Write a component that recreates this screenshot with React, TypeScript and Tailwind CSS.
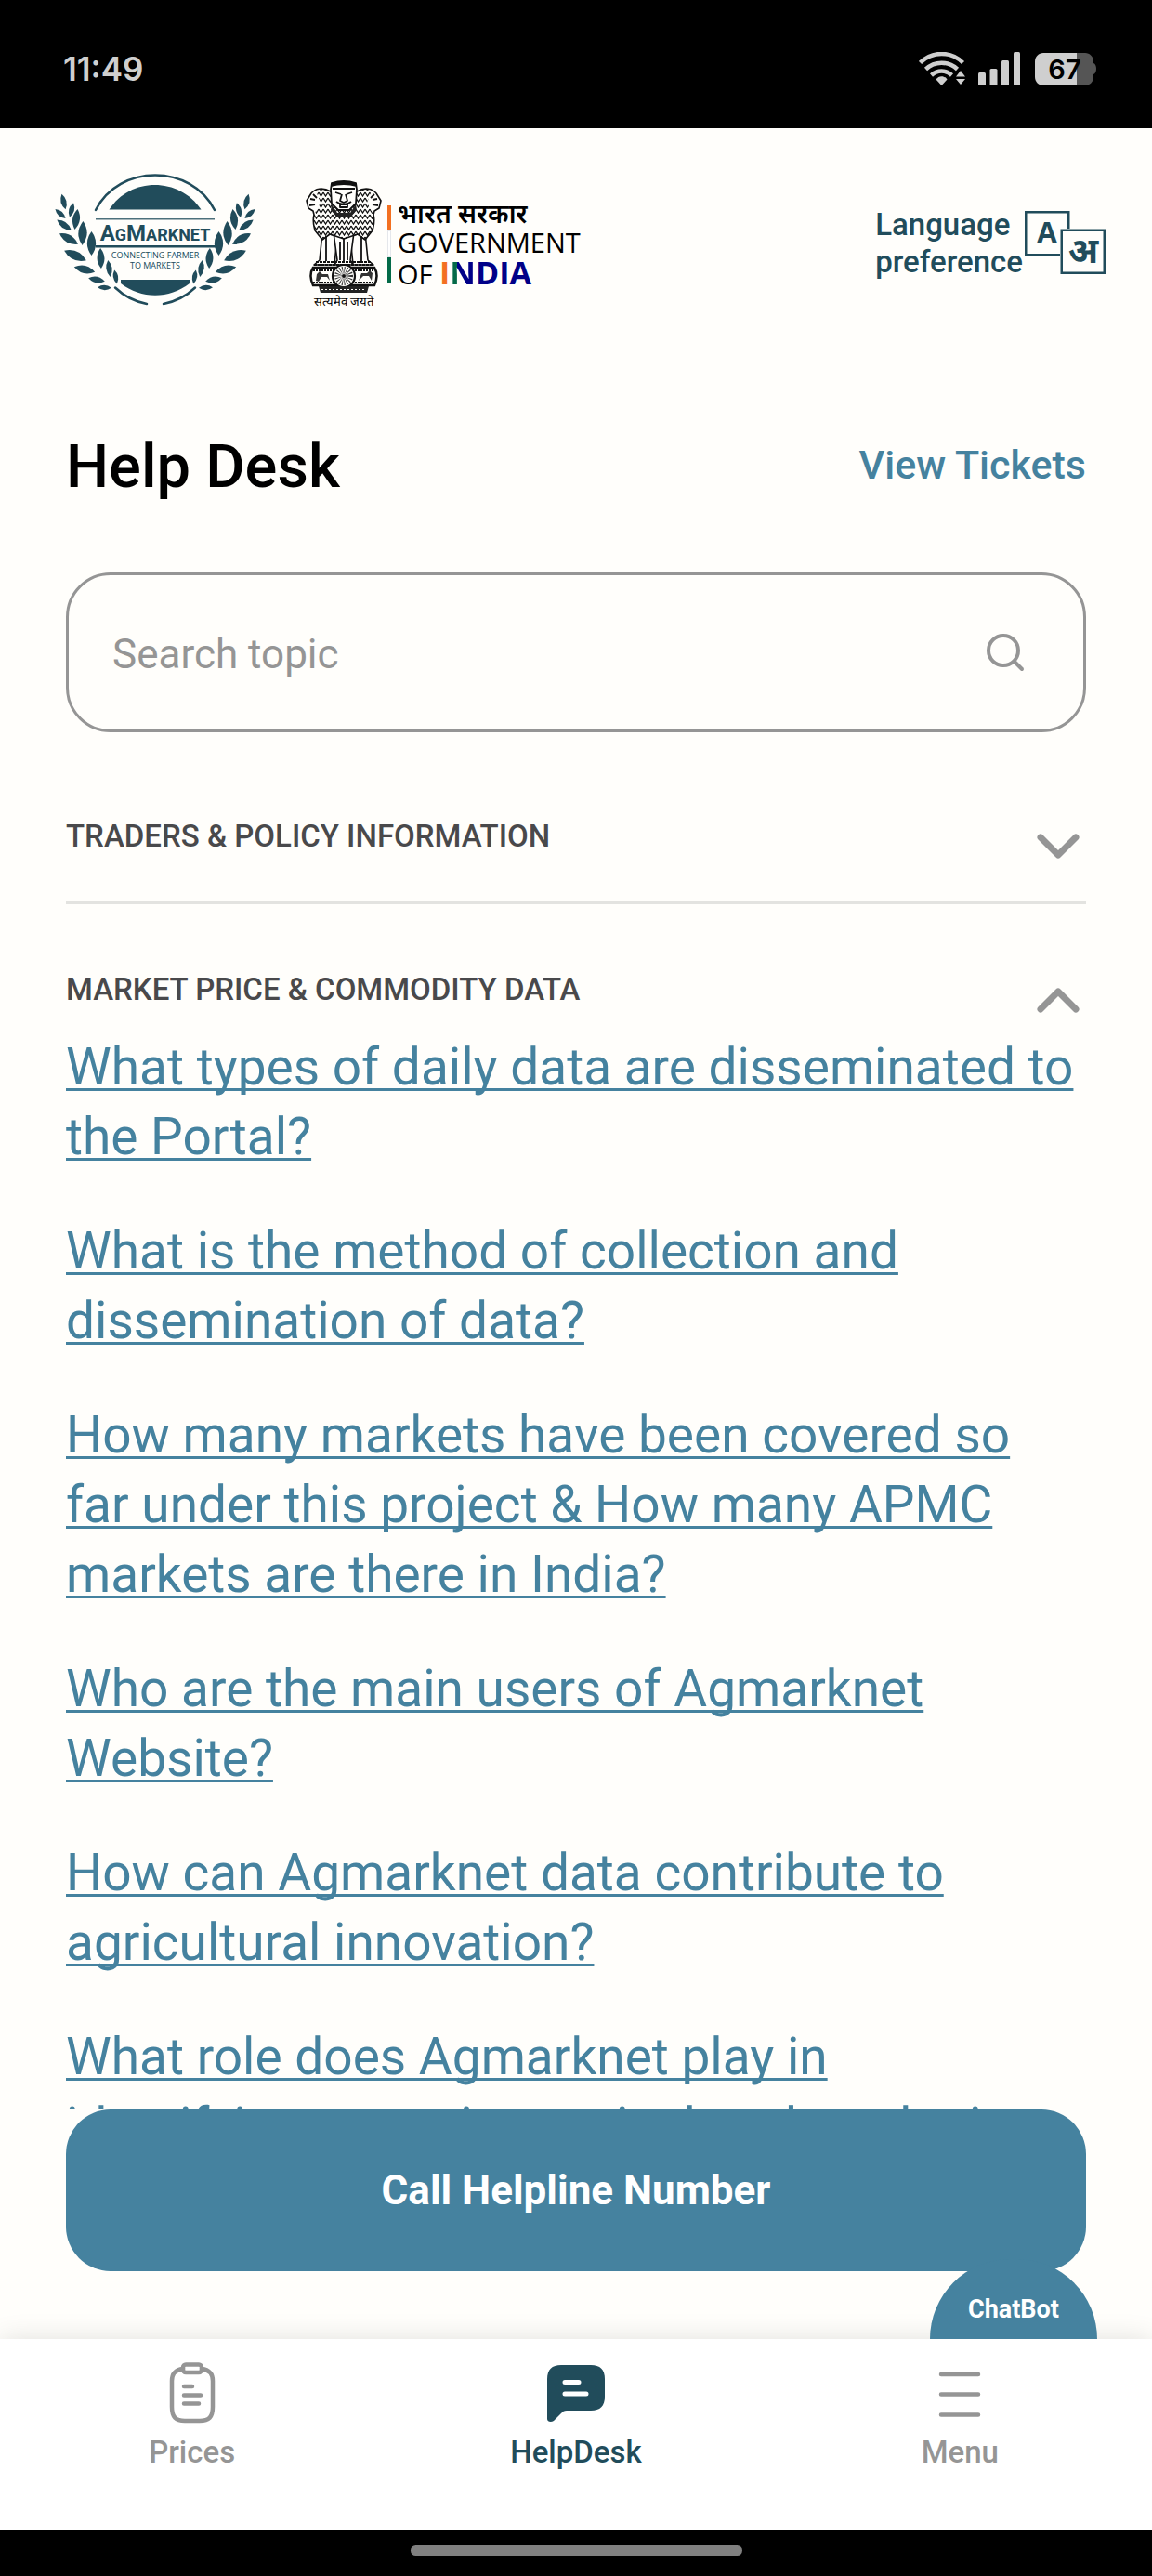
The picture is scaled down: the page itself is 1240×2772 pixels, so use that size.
import { useState } from 'react';

/* ── data ────────────────────────────────────────────────── */

const questions = [
  'What types of daily data are disseminated to the Portal?',
  'What is the method of collection and dissemination of data?',
  'How many markets have been covered so far under this project & How many APMC markets are there in India?',
  'Who are the main users of Agmarknet Website?',
  'How can Agmarknet data contribute to agricultural innovation?',
  'What role does Agmarknet play in identifying\u00a0emerging agricultural marketing trends?',
];

const sections = [
  { title: 'TRADERS & POLICY INFORMATION', items: [] as string[] },
  { title: 'MARKET PRICE & COMMODITY DATA', items: questions },
];

/* ── status bar ──────────────────────────────────────────── */

function StatusIcons() {
  return (
    <svg className="h-[36px] w-[191px]" viewBox="0 0 191 36" aria-hidden="true">
      <g fill="none" stroke="#cfcfcf" strokeWidth="4.5">
        <path d="M1.500 11.500C14.500-1.200 34.500-1.200 47.500 11.500" />
        <path d="M7.500 18.500C17 9.500 32 9.500 41.500 18.500" />
        <path d="M13.500 25C20 19 29 19 35.500 25" />
      </g>
      <path d="M24.500 36l-6-6.500c3-4.500 9-4.500 12 0z" fill="#cfcfcf" />
      <path d="M45 20l5 6.500H40zM45 35l5-6H40z" fill="#cfcfcf" />
      <g fill="#cfcfcf">
        <rect x="64" y="22" width="8" height="14" rx="1.500" />
        <rect x="76.500" y="18" width="8" height="18" rx="1.500" />
        <rect x="89" y="9" width="8" height="27" rx="1.500" />
        <rect x="102" y="0" width="7" height="36" rx="1.500" />
      </g>
      <path d="M170 1h9c5 0 9 4 9 9v2c4 1 4 11 0 12v3c0 5-4 9-9 9h-9z" fill="#555" />
      <path d="M134 1h36v35h-36c-5 0-9-4-9-9V10c0-5 4-9 9-9z" fill="#cfcfcf" />
      <text x="157" y="29" textAnchor="middle" fontSize="29" fontWeight="600" fontFamily="Inter, sans-serif">
        67
      </text>
    </svg>
  );
}

/* ── logos ───────────────────────────────────────────────── */

// One branch of the wreath, the other one is mirrored
const leaves = [
  { x: 18.5, y: 47, r: 76, l: 8.5 },
  { x: 27, y: 56, r: 105, l: 8 },
  { x: 15, y: 60, r: 42, l: 7.5 },
  { x: 32, y: 66, r: 98, l: 11 },
  { x: 19, y: 72, r: 36, l: 9.5 },
  { x: 39, y: 81, r: 92, l: 13 },
  { x: 24, y: 87, r: 30, l: 11.5 },
  { x: 48.5, y: 92, r: 90, l: 13 },
  { x: 31, y: 105, r: 24, l: 13 },
  { x: 58.5, y: 108, r: 88, l: 11 },
  { x: 41, y: 120, r: 14, l: 11.5 },
  { x: 67.5, y: 119, r: 82, l: 9 },
  { x: 54, y: 131, r: 12, l: 9 },
  { x: 74.5, y: 128, r: 80, l: 7.5 },
  { x: 62.5, y: 139.5, r: 2, l: 7.5 },
];

function Branch() {
  return (
    <g>
      {leaves.map((leaf) => (
        <path
          key={`${leaf.x}-${leaf.y}`}
          transform={`translate(${leaf.x} ${leaf.y}) rotate(${leaf.r})`}
          d={`M${-leaf.l} 0Q0 ${-leaf.l * 0.72} ${leaf.l} 0Q0 ${leaf.l * 0.72} ${-leaf.l} 0z`}
        />
      ))}
    </g>
  );
}

function AgmarknetLogo() {
  return (
    <svg className="h-[170px] w-[240px]" viewBox="0 0 240 170" role="img" aria-label="Agmarknet">
      <g fill="#214c5b">
        <path d="M67.500 55.500C90 20 143 20 166.500 55.500z" />
        <path d="M80 131h74v4c-22 17-52 17-74 0z" />
        <Branch />
        <g transform="matrix(-1 0 0 1 234 0)">
          <Branch />
        </g>
        <rect x="53" y="94" width="129" height="2.500" />
        <rect x="53" y="65" width="128" height="1.500" opacity="0.8" />
      </g>
      <g fill="none" stroke="#214c5b" strokeWidth="2.500" strokeLinecap="round">
        <path d="M53 56C78 6 156 6 181 56" />
        <path d="M74 139.500Q88 153 108 157" />
        <path d="M160 139.500Q146 153 126 157" />
      </g>
      <g fill="#214c5b" textAnchor="middle">
        <text x="117" y="89" fontSize="24" fontWeight="700" fontFamily="Roboto, sans-serif">
          <tspan>A</tspan>
          <tspan fontSize="18">G</tspan>
          <tspan>M</tspan>
          <tspan fontSize="18">ARKNET</tspan>
        </text>
        <g fontSize="9" fontWeight="500" fontFamily="'Open Sans', 'Noto Sans', sans-serif">
          <text x="117" y="108">CONNECTING FARMER</text>
          <text x="117" y="119">TO MARKETS</text>
        </g>
      </g>
    </svg>
  );
}

function Lions() {
  return (
    <svg className="h-[122px] w-[84px]" viewBox="0 0 84 122" aria-hidden="true">
      <defs>
        <pattern id="fur" width="5" height="6" patternUnits="userSpaceOnUse">
          <path d="M0 1l2.500 4L5 1M-2.500 4L0 7M5 7l2.500-4" stroke="#111" strokeWidth="1.300" fill="none" />
        </pattern>
      </defs>
      <g fill="#fffefb" stroke="#111" strokeWidth="1.600" strokeLinejoin="round">
        <path d="M19 56l-3 30-6 5h22l3-31zM65 56l3 30 6 5H52l-3-31z" />
        <path d="M31 56l4 30-3 5h20l-3-5 4-30z" />
        <path d="M28 12C19 7 11 9 7 14l-5 8 2 8 5 3 1 4c-2 8 0 12 1 17l8 10 8-6 15 5 15-5 8 6 8-10c1-5 3-9 1-17l1-4 5-3 2-8-5-8c-4-5-12-7-21-2z" />
      </g>
      <path d="M28 12C19 7 14 9 13 14l4 10-7 13c-2 8 0 12 1 17l8 10 8-6 15 5 15-5 8 6 8-10c1-5 3-9 1-17l-7-13 4-10c-1-5-6-7-15-2z" fill="url(#fur)" />
      <g fill="#fffefb" stroke="#111" strokeWidth="1.800" strokeLinejoin="round">
        <path d="M29 3q13-4 26 0l1 7-1 15-7 7H36l-7-7-1-15z" />
        <path d="M30 9h24M33 13l6 2M51 13l-6 2M40 15l-2 7 4 2 4-2-2-7M34 23q8 6 16 0M38 25v4h8v-4" fill="none" />
        <path d="M6 20l5 1M5 27l6-1M9 15l4 4M78 20l-5 1M79 27l-6-1M75 15l-4 4M23 60v27M61 60v27M42 63v26M38 66v20M46 66v20" fill="none" />
      </g>
      <path d="M28 3q14-4 28 0v4q-14-4-28 0z" fill="#111" />
      <path d="M29 26l6 9h14l6-9 1 6-6 7H34l-6-7z" fill="#222" />
      <g fill="none" stroke="#111" strokeWidth="2" strokeDasharray="3 1">
        <path d="M10 91h64M12 88h60" />
      </g>
      <path d="M9 94h66q5 8 0 19H9q-5-11 0-19z" fill="#fffefb" stroke="#111" strokeWidth="2.500" />
      <path d="M9 110h66M9 97h66" stroke="#111" strokeWidth="2" strokeDasharray="2 1" />
      <path d="M12 108l1-7 3-3 3 3h6l2 7-3-4h-6l-3 5zM58 108l3-8h6l3-3 3 3-1 8-3-5h-6z" fill="#333" />
      <circle cx="42" cy="103" r="12" fill="#fffefb" stroke="#111" strokeWidth="2.200" />
      <circle cx="42" cy="103" r="6" fill="none" stroke="#333" strokeWidth="8" strokeDasharray="0.800 1.200" />
      <circle cx="42" cy="103" r="2" fill="#111" />
      <path d="M15 114h54l-2 7H17z" fill="#222" />
      <path d="M18 117.500h48" stroke="#fffefb" strokeDasharray="2 2" />
    </svg>
  );
}

function IndiaLogo() {
  return (
    <div className="flex items-start">
      <div className="flex w-[84px] flex-col items-center">
        <Lions />
        <span className="mt-[2px] text-[13px] leading-[14px] font-medium whitespace-nowrap text-black">सत्यमेव जयते</span>
      </div>
      <div className="mt-[27px] ml-[5px] flex h-[83px] w-[4px] flex-col">
        <span className="flex-1 bg-[#f37021]" />
        <span className="flex-1 border border-gray-200 bg-white" />
        <span className="flex-1 bg-[#046a48]" />
      </div>
      <div className="mt-[19px] ml-[7px] font-['Open_Sans','Noto_Sans',sans-serif] whitespace-nowrap text-black">
        <p className="text-[28px] leading-[32px] font-semibold">भारत सरकार</p>
        <p className="text-[29px] leading-[32px]">GOVERNMENT</p>
        <p className="text-[29px] leading-[32px]">
          OF{' '}
          <span className="text-[34px] leading-[32px] font-bold text-[#000088]">
            <span className="text-[#f37021]">I</span>
            <span className="bg-linear-to-r from-[#046a48] from-30% to-[#000088] to-30% bg-clip-text text-transparent">N</span>
            DIA
          </span>
        </p>
      </div>
    </div>
  );
}

function LanguageIcon() {
  return (
    <svg className="h-[68px] w-[87px]" viewBox="0 0 87 68" aria-hidden="true">
      <g fill="#fffefb" stroke="#214c5b" strokeWidth="2.500">
        <rect x="1.250" y="1.250" width="46" height="46" />
        <rect x="38" y="19" width="49" height="49" stroke="none" />
        <rect x="39.750" y="20.750" width="46" height="46" />
      </g>
      <g fill="#214c5b" fontWeight="700" textAnchor="middle">
        <text x="24" y="34" fontSize="31" fontFamily="'Open Sans', sans-serif">A</text>
        <text x="63" y="56" fontSize="38" fontFamily="'Noto Sans', sans-serif">अ</text>
      </g>
    </svg>
  );
}

/* ── bottom navigation icons ─────────────────────────────── */

function PricesIcon() {
  return (
    <svg className="h-[66px] w-[50px]" viewBox="0 0 50 66" fill="none" stroke="#959595" strokeWidth="4.500" strokeLinecap="round" strokeLinejoin="round" aria-hidden="true">
      <path d="M15 7C7 8 3 12 3 20v28c0 11 4 15 14 15h16c10 0 14-4 14-15V20c0-8-4-12-12-13" />
      <rect x="15" y="2.500" width="20" height="8.500" rx="3" />
      <path d="M16 26h9M16 35.500h18M16 44.500h16" />
    </svg>
  );
}

function HelpDeskIcon() {
  return (
    <svg className="h-[66px] w-[64px]" viewBox="0 0 64 66" aria-hidden="true">
      <path d="M16 3h32c10 0 15 5 15 15v19c0 10-5 15-15 15H22c-3 0-4 1-6 3l-8 8c-3 2-7 1-7-2V18C1 8 6 3 16 3z" fill="#214c5b" />
      <path d="M20 21.500h15M20 34h23" stroke="#fff" strokeWidth="5" strokeLinecap="round" />
    </svg>
  );
}

function MenuIcon() {
  return (
    <svg className="h-[66px] w-[46px]" viewBox="0 0 46 66" stroke="#959595" strokeWidth="4.500" strokeLinecap="round" aria-hidden="true">
      <path d="M3 13h40M3 34.500h40M3 56.500h40" />
    </svg>
  );
}

const tabs = [
  { label: 'Prices', icon: <PricesIcon />, active: false },
  { label: 'HelpDesk', icon: <HelpDeskIcon />, active: true },
  { label: 'Menu', icon: <MenuIcon />, active: false },
];

/* ── page ────────────────────────────────────────────────── */

export default function App() {
  const [openSection, setOpenSection] = useState('MARKET PRICE & COMMODITY DATA');
  const [search, setSearch] = useState('');

  return (
    <div className="flex h-screen flex-col overflow-hidden bg-[#fffefb] font-[Roboto,'Liberation_Sans',sans-serif]">
      <div className="flex h-[138px] shrink-0 items-center justify-between bg-black pt-[10px] pr-[60px] pl-[68px]">
        <span className="font-[Inter,sans-serif] text-[35px] font-semibold text-[#cfcfcf]">11:49</span>
        <StatusIcons />
      </div>

      <header className="flex shrink-0 items-start justify-between pt-[32px] pr-[50px] pl-[50px]">
        <div className="flex items-start gap-[38px]">
          <AgmarknetLogo />
          <div className="pt-[24px]">
            <IndiaLogo />
          </div>
        </div>
        <button type="button" className="mt-[52px] flex items-start text-left text-[33px] leading-[40px] font-medium text-[#214c5b]">
          <span>
            Language
            <br />
            preference
          </span>
          <span className="mt-[5px] ml-[2px]">
            <LanguageIcon />
          </span>
        </button>
      </header>

      <main className="flex min-h-0 flex-1 flex-col px-[71px]">
        <div className="flex shrink-0 items-start justify-between pt-[120px]">
          <h1 className="text-[65px] leading-[84px] font-medium text-black">Help Desk</h1>
          <a href="#tickets" className="text-[43px] leading-[80px] font-medium text-[#45829f]">View Tickets</a>
        </div>

        <label className="mt-[72px] flex h-[172px] shrink-0 items-center rounded-[48px] border-3 border-[#959595] pr-[62px] pl-[47px]">
          <span className="sr-only">Search topic</span>
          <input
            type="text"
            value={search}
            onChange={(e) => setSearch(e.target.value)}
            placeholder="Search topic"
            className="min-w-0 flex-1 bg-transparent pt-1 text-[44px] text-black outline-none placeholder:text-[#959595]"
          />
          <svg className="size-[44px]" viewBox="0 0 44 44" fill="none" stroke="#959595" strokeWidth="4" strokeLinecap="round" aria-hidden="true">
            <circle cx="20" cy="20" r="16" />
            <path d="M32 32l8 8" />
          </svg>
        </label>

        <div className="mt-[60px] min-h-0 flex-1 overflow-hidden">
          {sections.map((section) => {
            const open = openSection === section.title;
            return (
              <section key={section.title} className={open ? '' : 'mb-[40px] border-b-3 border-[#e3e3e0]'}>
                <button
                  type="button"
                  aria-expanded={open}
                  onClick={() => setOpenSection(open ? '' : section.title)}
                  className={`flex w-full items-start justify-between text-left ${open ? 'h-[98px]' : 'h-[122px]'}`}
                >
                  <span className="pt-[32px] text-[33px] leading-[40px] font-medium text-[#49494b]">{section.title}</span>
                  <svg className="mt-[47px] mr-[6px] h-[32px] w-[48px]" viewBox="0 0 48 32" fill="none" stroke="#959595" strokeWidth="7" strokeLinecap="round" strokeLinejoin="round" aria-hidden="true">
                    <path d={open ? 'M5 26L24 7l19 19' : 'M5 6l19 19L43 6'} />
                  </svg>
                </button>
                {open && (
                  <ul className="flex flex-col gap-[48px] pr-[8px]">
                    {section.items.map((question) => (
                      <li key={question}>
                        <a
                          href="#answer"
                          className="block text-[55px] leading-[75px] text-[#45829f] underline decoration-3 underline-offset-[4px] [text-decoration-skip-ink:none]"
                        >
                          {question}
                        </a>
                      </li>
                    ))}
                  </ul>
                )}
              </section>
            );
          })}
        </div>

        <a
          href="tel:"
          className="mb-[73px] flex h-[174px] shrink-0 items-center justify-center rounded-[48px] bg-[#45829f] text-[44px] font-bold text-white"
        >
          Call Helpline Number
        </a>
      </main>

      <div className="relative shrink-0">
        <button
          type="button"
          className="absolute right-[59px] bottom-full h-[86px] w-[180px] rounded-t-full bg-[#45829f] pt-[22px] text-[27px] font-bold text-white"
        >
          ChatBot
        </button>
        <nav className="flex h-[206px] bg-white shadow-[0_0_28px_rgba(0,0,0,0.12)]">
          {tabs.map((tab) => (
            <a
              key={tab.label}
              href={`#${tab.label.toLowerCase()}`}
              className={`flex flex-1 flex-col items-center pt-[25px] text-[33px] leading-[40px] font-medium ${tab.active ? 'text-[#214c5b]' : 'text-[#959595]'}`}
            >
              {tab.icon}
              <span className="mt-[11px]">{tab.label}</span>
            </a>
          ))}
        </nav>
        <div className="flex h-[49px] items-center justify-center bg-black">
          <span className="mb-[6px] h-[11px] w-[357px] rounded-full bg-[#808080]" />
        </div>
      </div>
    </div>
  );
}
